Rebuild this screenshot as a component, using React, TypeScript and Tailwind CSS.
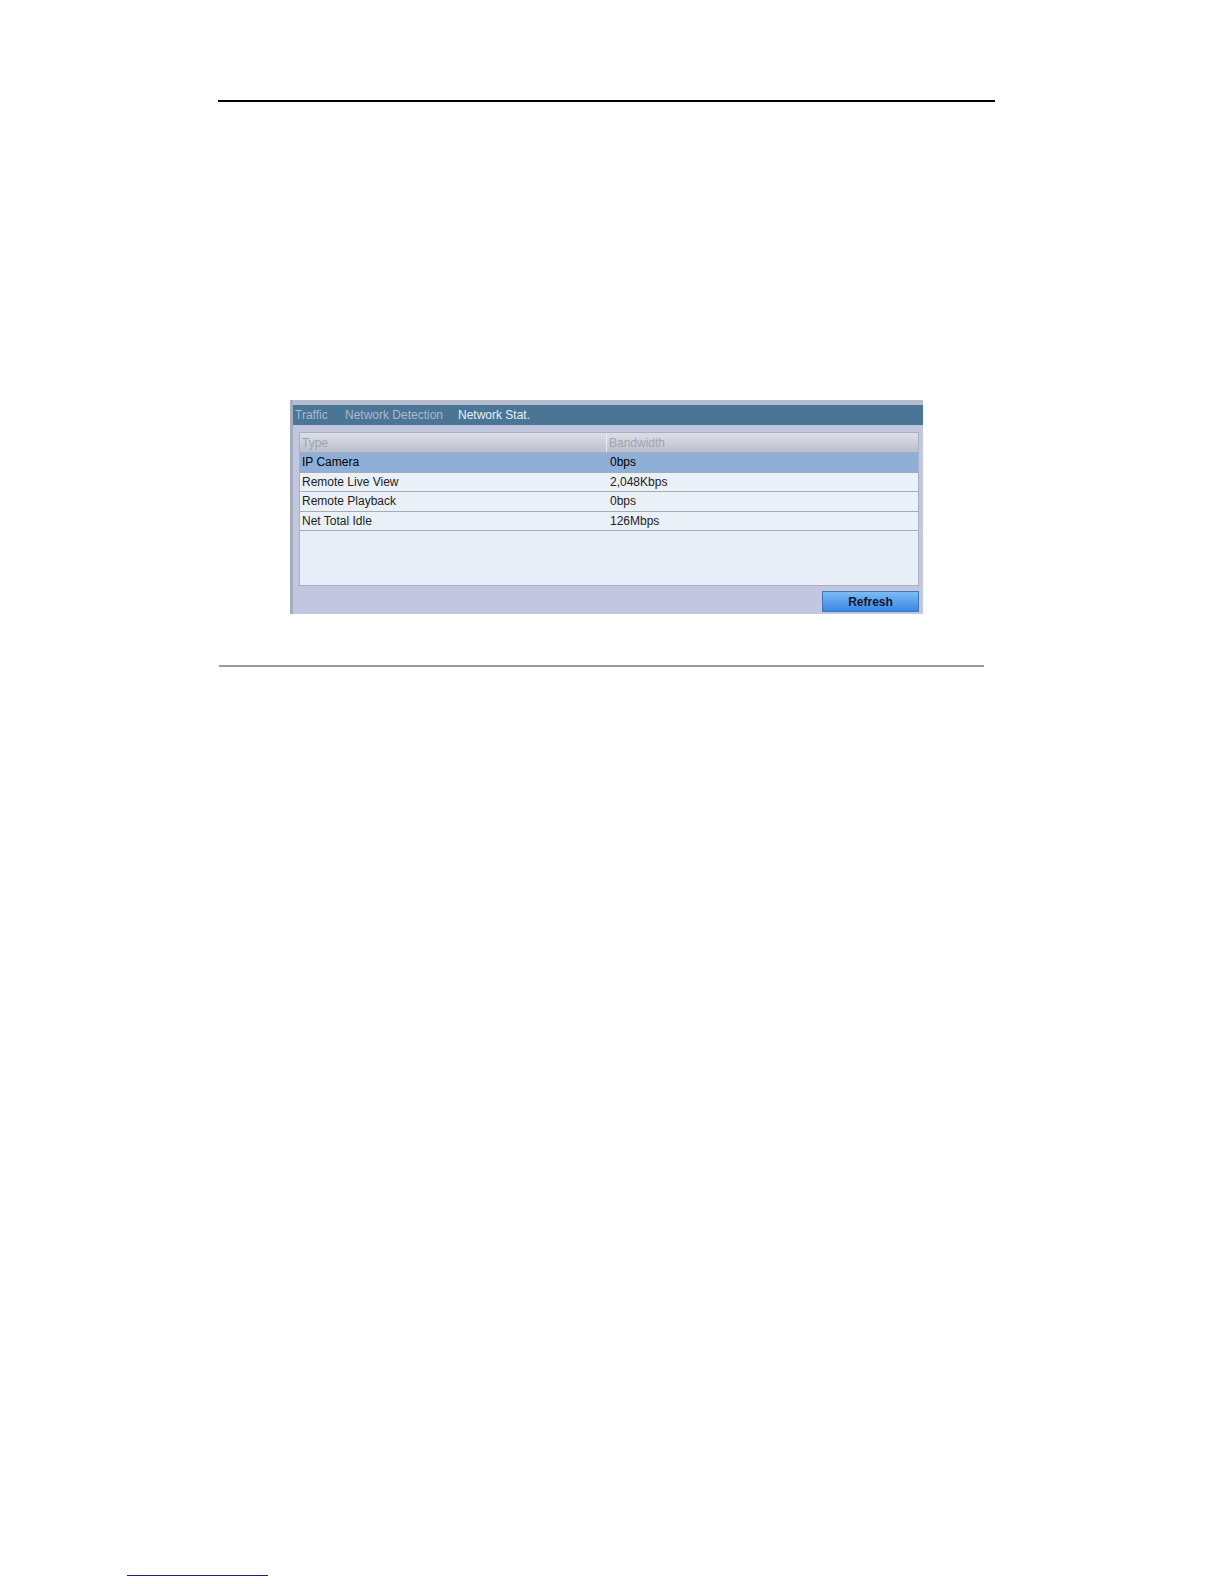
const rows = [
  { type: 'IP Camera', bw: '0bps', selected: true },
  { type: 'Remote Live View', bw: '2,048Kbps' },
  { type: 'Remote Playback', bw: '0bps' },
  { type: 'Net Total Idle', bw: '126Mbps' },
]

const tabs = [
  { label: 'Traffic', active: false, w: 'w-[50px]' },
  { label: 'Network Detection', active: false, w: 'w-[113px]' },
  { label: 'Network Stat.', active: true, w: 'w-[100px]' },
]

function NetworkPanel() {
  return (
    <div className="ml-[290px] mt-[298px] w-[633px] h-[214px] flex flex-col bg-[#c2c6de] border-l-[3px] border-[#a4acbe] text-[12px] font-['Liberation_Sans',Arial,sans-serif]">
      {/* tab strip */}
      <div className="h-[5px] bg-[#b6bdcf]" />
      <div className="h-[20px] bg-[#4b7595] flex items-center pl-[2px]">
        {tabs.map((t) => (
          <div
            key={t.label}
            className={`${t.w} ${t.active ? 'text-[#e4f0fc]' : 'text-[#a9bccd]'}`}
          >
            {t.label}
          </div>
        ))}
      </div>

      {/* body */}
      <div className="flex-1 flex flex-col pl-[6px] pr-[4px] pt-[7px]">
        <div className="h-[154px] bg-[#e8eef8] border border-[#a8b0c2] flex flex-col">
          <div className="h-[20px] flex bg-gradient-to-b from-[#dcdfe8] to-[#bcc0cc] border-b border-[#a8acb8] text-[#9ea4b2]">
            <div className="w-[307px] pl-[2px] flex items-center border-r border-[#e8ecf2]">Type</div>
            <div className="flex-1 pl-[2px] flex items-center">Bandwidth</div>
          </div>
          {rows.map((r) => (
            <div
              key={r.type}
              className={`h-[19.5px] flex items-center border-b border-[#a4acb6] ${
                r.selected ? 'bg-[#8eb0d8] text-black' : 'bg-[#eaf0f8] text-[#222]'
              }`}
            >
              <div className="w-[308px] pl-[2px]">{r.type}</div>
              <div className="flex-1 pl-[2px]">{r.bw}</div>
            </div>
          ))}
        </div>
        <div className="flex justify-end pt-[5px]">
          <button className="w-[97px] h-[21px] border border-[#3c78c0] bg-gradient-to-b from-[#7cbcf4] to-[#3a86e4] text-[#101830] text-[12px] font-bold flex items-center justify-center">
            Refresh
          </button>
        </div>
      </div>
    </div>
  )
}

export default function App() {
  return (
    <div className="w-[1224px] h-[1584px] bg-white overflow-hidden flex flex-col">
      <div className="ml-[218px] mt-[100px] w-[777px] h-[2px] bg-black" />
      <NetworkPanel />
      <div className="ml-[219px] mt-[51px] w-[765px] h-[2px] bg-[#9c9c9c]" />
      <div className="ml-[127px] mt-[908px] w-[141px] h-px bg-[#1c1c84]" />
    </div>
  )
}
